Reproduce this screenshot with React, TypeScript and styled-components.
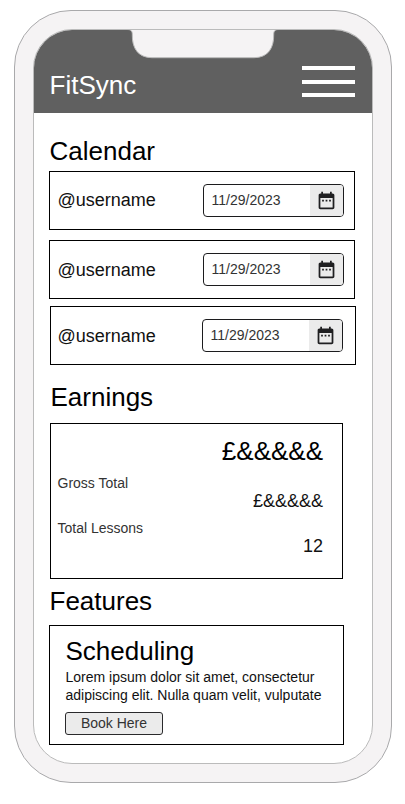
import React from "react";
import styled, { createGlobalStyle } from "styled-components";

const GlobalStyle = createGlobalStyle`
  * { box-sizing: border-box; }
  body {
    margin: 0;
    background: #fff;
    color: #000;
    font-family: "Liberation Sans", Arial, sans-serif;
  }
`;

const Page = styled.div`
  height: 804px;
  padding: 10px 0 0 14px;
`;

const Phone = styled.div`
  width: 378px;
  height: 773px;
  padding: 18px;
  border: 1px solid #a9a9ab;
  border-radius: 57px;
  background: #f5f3f4;
`;

const Screen = styled.div`
  position: relative;
  height: 735px;
  border: 1px solid #bbb;
  border-radius: 39px;
  background: #fff;
  overflow: hidden;
`;

const Notch = styled.svg`
  position: absolute;
  top: -1px;
  left: 91px;
`;

const Header = styled.header`
  display: flex;
  justify-content: space-between;
  align-items: flex-start;
  height: 83px;
  padding: 36px 17px 0 15.5px;
  background: #606060;
`;

const Brand = styled.h1`
  margin: 4px 0 0;
  font-size: 26px;
  line-height: 30px;
  font-weight: 400;
  color: #fff;
`;

const MenuButton = styled.button`
  display: flex;
  flex-direction: column;
  justify-content: space-between;
  width: 53px;
  height: 31px;
  padding: 0;
  border: 0;
  background: none;
`;

const MenuBar = styled.span`
  height: 4px;
  width: 100%;
  background: #fff;
`;

const Content = styled.main`
  padding: 23px 0 0 15px;
`;

const Section = styled.section<{ $height: number }>`
  height: ${(p) => p.$height}px;
`;

const SectionTitle = styled.h2<{ $indent?: number; $gap: number }>`
  margin: 0 0 ${(p) => p.$gap}px ${(p) => p.$indent ?? 0.5}px;
  font-size: 26px;
  line-height: 30px;
  font-weight: 400;
`;

const Booking = styled.div<{ $shift?: number; $gap?: number }>`
  display: flex;
  align-items: center;
  justify-content: space-between;
  width: 306px;
  height: 59px;
  margin-left: ${(p) => p.$shift ?? 0}px;
  margin-bottom: ${(p) => p.$gap ?? 0}px;
  padding: 0 ${(p) => (p.$shift ? 12 : 10)}px 0 ${(p) => (p.$shift ? 6.5 : 7.5)}px;
  border: 1px solid #000;
`;

const Username = styled.span<{ $lift?: number }>`
  padding-bottom: ${(p) => (p.$lift ?? 0) * 2}px;
  font-size: 18px;
  line-height: 20px;
  color: #111;
`;

const DateField = styled.div`
  display: flex;
  width: 141px;
  height: 33px;
  border: 1px solid #1c1c1e;
  border-radius: 4px;
  overflow: hidden;
`;

const DateValue = styled.span`
  flex: 1;
  padding-left: 7.5px;
  font-size: 14px;
  line-height: 31px;
  color: #333;
`;

const DateToggle = styled.span`
  display: flex;
  align-items: center;
  justify-content: center;
  width: 33px;
  padding: 0 1px 1px 0;
  background: #ebebeb;
`;

const Earnings = styled.div`
  width: 293px;
  height: 156px;
  margin-left: 1px;
  padding: 12px 19px 0 6.5px;
  border: 1px solid #000;
`;

const Total = styled.div`
  height: 39px;
  font-size: 26px;
  line-height: 30px;
  text-align: right;
`;

const Stat = styled.div`
  display: flex;
  justify-content: space-between;
  align-items: flex-start;
  height: 45px;
`;

const StatLabel = styled.span`
  font-size: 14px;
  line-height: 16px;
  color: #333;
`;

const StatValue = styled.span`
  margin-top: 16px;
  font-size: 18px;
  line-height: 20px;
  color: #111;
`;

const Feature = styled.article`
  width: 295px;
  height: 120px;
  padding: 10px 0 0 15px;
  border: 1px solid #000;
`;

const FeatureTitle = styled.h3`
  margin: 0 0 2px 0.5px;
  font-size: 26px;
  line-height: 30px;
  font-weight: 400;
`;

const FeatureText = styled.p`
  margin: 0 0 8px 0.5px;
  font-size: 14px;
  line-height: 18px;
  color: #111;
  white-space: nowrap;
`;

const BookButton = styled.button`
  display: block;
  width: 98px;
  height: 23px;
  padding: 0;
  border: 1px solid #2a2a2c;
  border-radius: 3px;
  background: #ebebeb;
  color: #333;
  font: 14px/21px "Liberation Sans", Arial, sans-serif;
`;

const CalendarIcon = () => (
  <svg width="21" height="21" viewBox="0 0 24 24" fill="#1f1f21">
    <path d="M9 11H7v2h2v-2zm4 0h-2v2h2v-2zm4 0h-2v2h2v-2zm2-7h-1V2h-2v2H8V2H6v2H5c-1.11 0-1.99.9-1.99 2L3 20c0 1.1.89 2 2 2h14c1.1 0 2-.9 2-2V6c0-1.1-.9-2-2-2zm0 16H5V9h14v11z" />
  </svg>
);

const bookings = [
  { user: "@username", date: "11/29/2023", gap: 10, lift: 1 },
  { user: "@username", date: "11/29/2023", gap: 7 },
  { user: "@username", date: "11/29/2023", shift: 1 },
];

const stats = [
  { label: "Gross Total", value: "£&&&&&" },
  { label: "Total Lessons", value: "12" },
];

export default function App() {
  return (
    <Page>
      <GlobalStyle />
      <Phone>
        <Screen>
          <Header>
            <Brand>FitSync</Brand>
            <MenuButton aria-label="Menu">
              <MenuBar />
              <MenuBar />
              <MenuBar />
            </MenuButton>
          </Header>
          <Notch width="156" height="32" viewBox="0 0 156 32">
            <path
              d="M0 -2V0.5H2C6 0.5 7.3 2 7.3 5.5C7 19 13 28.7 27 28.7H129C143 28.7 149 19 148.7 5.5C148.7 2 150 0.5 154 0.5H156V-2Z"
              fill="#f5f3f4"
              stroke="#bbb"
            />
          </Notch>
          <Content>
            <Section $height={246}>
              <SectionTitle $gap={5}>Calendar</SectionTitle>
              {bookings.map((b, i) => (
                <Booking key={i} $shift={b.shift} $gap={b.gap}>
                  <Username $lift={b.lift}>{b.user}</Username>
                  <DateField>
                    <DateValue>{b.date}</DateValue>
                    <DateToggle>
                      <CalendarIcon />
                    </DateToggle>
                  </DateField>
                </Booking>
              ))}
            </Section>
            <Section $height={204}>
              <SectionTitle $gap={11} $indent={1.5}>
                Earnings
              </SectionTitle>
              <Earnings>
                <Total>£&amp;&amp;&amp;&amp;&amp;</Total>
                {stats.map((s) => (
                  <Stat key={s.label}>
                    <StatLabel>{s.label}</StatLabel>
                    <StatValue>{s.value}</StatValue>
                  </Stat>
                ))}
              </Earnings>
            </Section>
            <Section $height={159}>
              <SectionTitle $gap={9}>Features</SectionTitle>
              <Feature>
                <FeatureTitle>Scheduling</FeatureTitle>
                <FeatureText>
                  Lorem ipsum dolor sit amet, consectetur
                  <br />
                  adipiscing elit. Nulla quam velit, vulputate
                </FeatureText>
                <BookButton>Book Here</BookButton>
              </Feature>
            </Section>
          </Content>
        </Screen>
      </Phone>
    </Page>
  );
}
